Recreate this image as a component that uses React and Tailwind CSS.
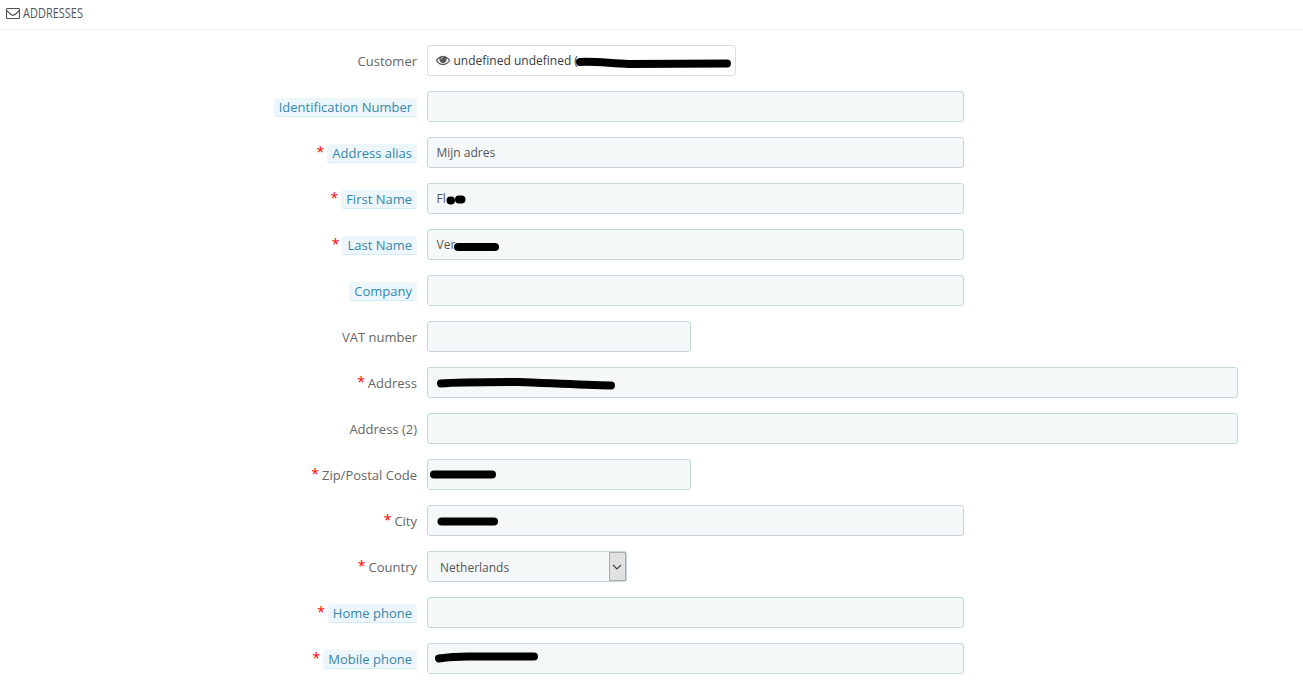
import React from 'react';

const fields = [
  { label: 'Identification Number', hint: true },
  { label: 'Address alias', hint: true, required: true, value: 'Mijn adres' },
  { label: 'First Name', hint: true, required: true, value: 'Fl', mark: 'M23.5 17.5 L24 17.5 M32 16.5 L34.5 16.5' },
  { label: 'Last Name', hint: true, required: true, value: 'Ver', mark: 'M31 18 L68 18' },
  { label: 'Company', hint: true },
  { label: 'VAT number', size: 'w-[264px]' },
  { label: 'Address', required: true, size: 'w-[811px]', mark: 'M14 16.5 C30 15 60 15 92 15 C120 16 155 18 184 18.5' },
  { label: 'Address (2)', size: 'w-[811px]' },
  { label: 'Zip/Postal Code', required: true, size: 'w-[264px]', mark: 'M7 15.5 L65 15.5' },
  { label: 'City', required: true, mark: 'M14.5 16.5 L67 16.5' },
  { label: 'Country', required: true, select: true, value: 'Netherlands' },
  { label: 'Home phone', hint: true, required: true },
  { label: 'Mobile phone', hint: true, required: true, mark: 'M12 15.5 C22 14 32 13.5 42 13.5 L107 13.5' },
];

const EnvelopeIcon = () => (
  <svg className="h-3 w-[14px]" viewBox="0 0 14 12" fill="none" stroke="#555" strokeWidth="1.1">
    <rect x="0.5" y="1.5" width="13" height="10" rx="1" />
    <path d="M0.7 3.5 C3 5.9 5.5 8.3 7 8.3 C8.5 8.3 11 5.9 13.3 3.5" />
  </svg>
);

const EyeIcon = () => (
  <svg className="h-[14px] w-[14px] shrink-0 -translate-y-px" viewBox="0 0 1792 1792" fill="#555" stroke="#555" strokeWidth="30">
    <path d="M1664 960q-152-236-381-353 61 104 61 225 0 185-131.5 316.5t-316.5 131.5-316.5-131.5-131.5-316.5q0-121 61-225-229 117-381 353 133 205 333.5 326.5t434.5 121.5 434.5-121.5 333.5-326.5zm-720-384q0-20-14-34t-34-14q-125 0-214.5 89.5t-89.5 214.5q0 20 14 34t34 14 34-14 14-34q0-86 61-147t147-61q20 0 34-14t14-34zm848 384q0 34-20 69-140 230-376.5 368.5t-499.5 138.5-499.5-139-376.5-368q-20-35-20-69t20-69q140-229 376.5-368t499.5-139 499.5 139 376.5 368q20 35 20 69z" />
    <path d="M620 832 A276 276 0 0 0 1172 832 L1172 700 L960 620 L800 832 Z" />
  </svg>
);

// Marker stroke that hides private data, drawn over the control
const Mark = ({ d }) => (
  <svg className="pointer-events-none absolute -left-px -top-px h-[31px] w-[320px]" viewBox="0 0 320 31">
    <path d={d} fill="none" stroke="#000" strokeWidth="8" strokeLinecap="round" strokeLinejoin="round" />
  </svg>
);

const Label = ({ label, hint, required }) => (
  <div className="flex h-[31px] w-[417px] shrink-0 items-center justify-end pt-px text-[13px] leading-[18px] text-[#666]">
    {required && <span className="mr-[3px] -translate-y-px text-[14px] text-[red]">*</span>}
    {hint ? (
      <span className="rounded-[3px] border-b border-[#d4ebf7] bg-[#edf7fb] px-[5px] text-[#3586ae]">{label}</span>
    ) : (
      <span>{label}</span>
    )}
  </div>
);

const Field = ({ field }) => {
  if (field.select) {
    return (
      <div className="flex h-[31px] w-[200px] items-center justify-between rounded-[3px] border border-[#c7d6db] bg-[#f5f8f9] pl-3 text-xs text-[#555]">
        <span className="pt-[2px]">{field.value}</span>
        <span className="flex h-[29px] w-[17px] items-center justify-center border border-[#adadad] bg-[#e1e1e1] pr-px">
          <svg className="h-2 w-[10px] shrink-0" viewBox="0 0 10 8" fill="none" stroke="#444" strokeWidth="1.2">
            <path d="M1 2 L5 6 L9 2" />
          </svg>
        </span>
      </div>
    );
  }

  return (
    <div className={`relative flex h-[31px] items-center rounded-[3px] border border-[#c7d6db] bg-[#f5f8f9] pl-[8.5px] pt-px text-xs text-[#555] ${field.size || 'w-[537px]'}`}>
      {field.value}
      {field.mark && <Mark d={field.mark} />}
    </div>
  );
};

const App = () => {
  return (
    <div className="h-[687px] overflow-hidden bg-white font-['Open_Sans',sans-serif]">
      <header className="flex h-[30px] items-center border-b border-[#eee] pb-[3px] pl-[6px] text-[#555]">
        <EnvelopeIcon />
        <h3 className="ml-[3px] origin-left -translate-y-px scale-x-[0.785] text-[14px] uppercase leading-[17px]">Addresses</h3>
      </header>

      <div className="flex flex-col gap-[15px] pt-[15px]">
        <div className="flex gap-[10px]">
          <Label label="Customer" />
          <div className="relative flex h-[31px] w-[309px] items-center rounded-[3px] border border-[#ddd] bg-white pl-2 text-xs text-[#363a41]">
            <EyeIcon />
            <span className="ml-[3.5px] whitespace-nowrap">undefined undefined (</span>
            <Mark d="M153 17 C165 16 180 18 202 19 L300 18.5" />
          </div>
        </div>

        {fields.map((field) => (
          <div key={field.label} className="flex gap-[10px]">
            <Label label={field.label} hint={field.hint} required={field.required} />
            <Field field={field} />
          </div>
        ))}
      </div>
    </div>
  );
};

export default App;
